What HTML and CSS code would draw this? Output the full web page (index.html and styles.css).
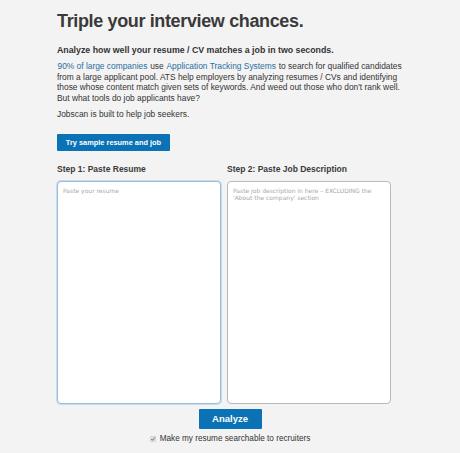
FILE: index.html
```html
<!DOCTYPE html>
<html lang="en">
<head>
<meta charset="utf-8">
<title>Jobscan</title>
<link rel="stylesheet" href="styles.css">
</head>
<body>
<main class="page">
  <h1 class="title">Triple your interview chances.</h1>
  <h2 class="subtitle">Analyze how well your resume / CV matches a job in two seconds.</h2>
  <p class="intro"><a href="#" class="link">90% of large companies</a> use <a href="#" class="link">Application Tracking Systems</a> to search for qualified candidates from a large applicant pool. ATS help employers by analyzing resumes / CVs and identifying those whose content match given sets of keywords. And weed out those who don't rank well. But what tools do job applicants have?</p>
  <p class="intro">Jobscan is built to help job seekers.</p>
  <button class="btn btn-sample" type="button">Try sample resume and job</button>
  <div class="steps">
    <div class="step">
      <h3 class="step-title">Step 1: Paste Resume</h3>
      <textarea class="box box-focus" placeholder="Paste your resume"></textarea>
    </div>
    <div class="step">
      <h3 class="step-title">Step 2: Paste Job Description</h3>
      <textarea class="box" placeholder="Paste job description in here – EXCLUDING the 'About the company' section"></textarea>
    </div>
  </div>
  <div class="actions">
    <button class="btn btn-analyze" type="button">Analyze</button>
    <label class="check"><svg class="checkbox" width="6" height="6" viewBox="0 0 6 6"><rect x="0.25" y="0.25" width="5.5" height="5.5" rx="1" fill="#e2e2e2" stroke="#bdbdbd" stroke-width="0.5"/><path d="M1.3 3.1 L2.5 4.3 L4.8 1.5" fill="none" stroke="#555" stroke-width="0.9"/></svg>Make my resume searchable to recruiters</label>
  </div>
</main>
</body>
</html>
```

FILE: styles.css
```css
html, body {
  margin: 0;
  padding: 0;
  background: #f3f3f3;
}
body {
  font-family: "Liberation Sans", Arial, sans-serif;
  color: #333;
}
.page {
  width: 346px;
  margin: 0 auto;
  padding-top: 10px;
}
.title {
  margin: 0;
  font-size: 18px;
  line-height: 22px;
  font-weight: bold;
  color: #3a3a3a;
  letter-spacing: -0.36px;
}
.subtitle {
  margin: 12px 0 0;
  font-size: 8.8px;
  line-height: 12px;
  font-weight: bold;
  color: #333;
}
.intro {
  margin: 5px -4px 0 0;
  font-size: 8.4px;
  line-height: 10.7px;
  color: #333;
}
.link {
  color: #2a6f9e;
  text-decoration: none;
  margin: 0 0.5px;
}
.btn {
  display: block;
  border: 0;
  border-radius: 1px;
  background: #0b72b5;
  color: #fff;
  font-family: "Liberation Sans", Arial, sans-serif;
  font-weight: bold;
  padding: 0;
  cursor: pointer;
}
.btn-sample {
  margin-top: 14px;
  width: 113px;
  height: 17px;
  font-size: 7.4px;
}
.steps {
  display: grid;
  grid-template-columns: 164px 164px;
  column-gap: 6px;
  margin-top: 12px;
}
.step-title {
  margin: 0 0 6px;
  font-size: 8.5px;
  line-height: 12px;
  font-weight: bold;
  color: #3a3a3a;
}
.box {
  display: block;
  box-sizing: border-box;
  width: 164px;
  height: 223px;
  margin: 0;
  padding: 5px 5px;
  border: 1px solid #b9b9b9;
  border-radius: 4px;
  background: #fff;
  resize: none;
  font-family: "DejaVu Sans", sans-serif;
  font-size: 6px;
  line-height: 7.5px;
  color: #333;
}
.box::placeholder {
  color: #a8a8a8;
}
.box-focus {
  border-color: #9dbcd9;
  box-shadow: 0 0 0 1px #c9dcee;
}
.actions {
  display: flex;
  flex-direction: column;
  align-items: center;
  margin-top: 5px;
}
.btn-analyze {
  width: 63px;
  height: 20px;
  font-size: 9.5px;
}
.check {
  display: flex;
  align-items: center;
  margin-top: 5px;
  font-size: 8.2px;
  line-height: 10px;
  color: #333;
}
.checkbox {
  display: block;
  margin-right: 4px;
  flex: none;
}
```
